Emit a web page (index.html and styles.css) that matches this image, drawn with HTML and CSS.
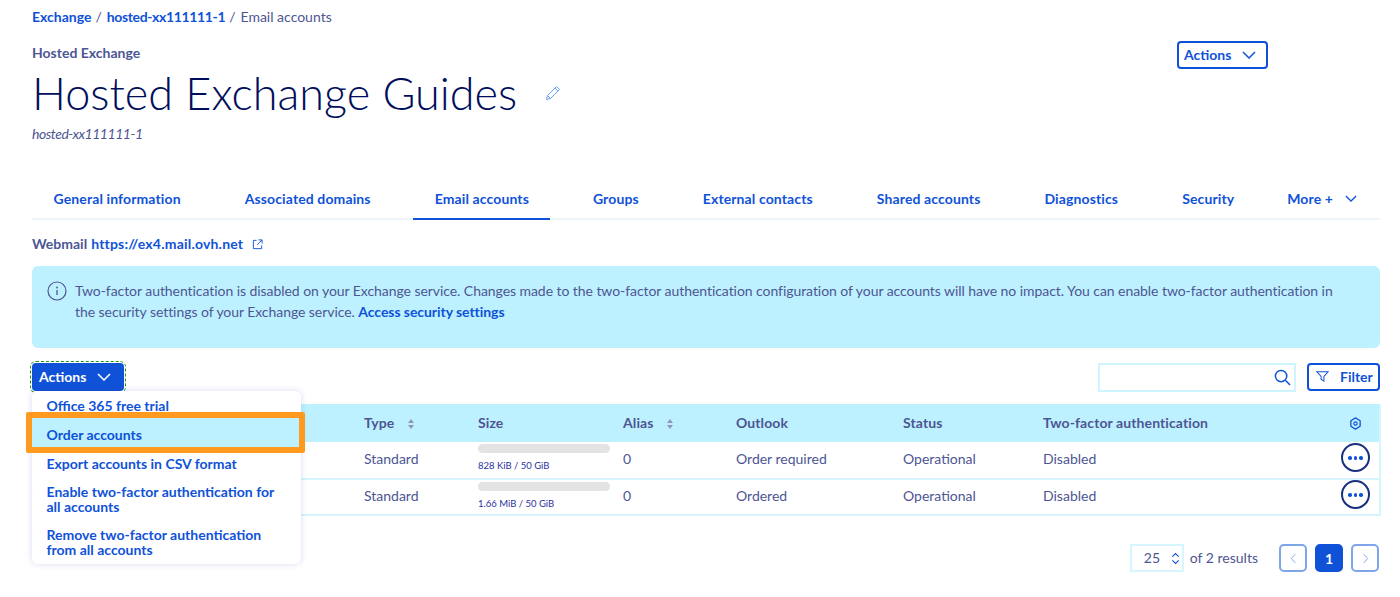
FILE: index.html
```html
<!DOCTYPE html>
<html lang="en">
<head>
<meta charset="utf-8">
<title>Email accounts</title>
<link rel="stylesheet" href="styles.css">
</head>
<body>
<nav class="crumbs"><a href="#">Exchange</a><span class="sep">/</span><a class="crumb-id" href="#">hosted-xx111111-1</a><span class="sep">/</span><span>Email accounts</span></nav>
<header class="head">
  <div class="head-main">
    <div class="eyebrow">Hosted Exchange</div>
    <div class="title-row">
      <h1>Hosted Exchange Guides</h1>
      <svg class="pencil" viewBox="0 0 16 16" width="16" height="16"><path d="M1.5 14.5l1-4L11.5 1.5l3 3-9 9zM2.5 10.5l3 3M10 3l3 3" fill="none" stroke="#6f9ff0" stroke-width="1"/></svg>
    </div>
    <div class="subtitle">hosted-xx111111-1</div>
  </div>
  <button class="btn btn-outline head-actions">Actions
    <svg class="chev" viewBox="0 0 14 8" width="14" height="8"><path d="M1 1l6 6 6-6" fill="none" stroke="currentColor" stroke-width="1.5"/></svg>
  </button>
</header>
<div class="tabs">
  <a class="tab" href="#">General information</a>
  <a class="tab" href="#">Associated domains</a>
  <a class="tab active" href="#">Email accounts</a>
  <a class="tab" href="#">Groups</a>
  <a class="tab" href="#">External contacts</a>
  <a class="tab" href="#">Shared accounts</a>
  <a class="tab" href="#">Diagnostics</a>
  <a class="tab" href="#">Security</a>
  <a class="tab more" href="#">More +
    <svg class="chev" viewBox="0 0 14 8" width="12" height="7"><path d="M1 1l6 6 6-6" fill="none" stroke="currentColor" stroke-width="1.5"/></svg>
  </a>
</div>
<div class="webmail"><strong>Webmail</strong> <a href="#">https://ex4.mail.ovh.net</a>
  <svg class="ext" viewBox="0 0 12 12" width="11" height="11"><path d="M5 1.5H1.5v9h9V7M7 1h4v4M11 1L5.5 6.5" fill="none" stroke="#0f52d8" stroke-width="1"/></svg>
</div>
<div class="alert">
  <svg class="info" viewBox="0 0 20 20" width="20" height="20"><circle cx="10" cy="10" r="9" fill="none" stroke="#4d5693" stroke-width="1.2"/><path d="M10 9v5" stroke="#4d5693" stroke-width="1.3"/><circle cx="10" cy="6.5" r=".9" fill="#4d5693"/></svg>
  <p>Two-factor authentication is disabled on your Exchange service. Changes made to the two-factor authentication configuration of your accounts will have no impact. You can enable two-factor authentication in the security settings of your Exchange service. <a href="#">Access security settings</a></p>
</div>
<div class="toolbar">
  <div class="menu-wrap">
    <button class="btn btn-solid">Actions
      <svg class="chev" viewBox="0 0 14 8" width="14" height="8"><path d="M1 1l6 6 6-6" fill="none" stroke="currentColor" stroke-width="1.5"/></svg>
    </button>
    <ul class="menu">
      <li><a href="#">Office 365 free trial</a></li>
      <li class="hl"><a href="#">Order accounts</a></li>
      <li><a href="#">Export accounts in CSV format</a></li>
      <li><a href="#">Enable two-factor authentication for all accounts</a></li>
      <li><a href="#">Remove two-factor authentication from all accounts</a></li>
    </ul>
  </div>
  <div class="tools">
    <div class="search">
      <svg viewBox="0 0 18 18" width="17" height="17"><circle cx="7.5" cy="7.5" r="6" fill="none" stroke="#0f52d8" stroke-width="1.6"/><path d="M12 12l5 5" stroke="#0f52d8" stroke-width="1.6"/></svg>
    </div>
    <button class="btn btn-outline filter">
      <svg viewBox="0 0 14 14" width="13" height="13"><path d="M1 2h12L8.5 7v5l-3-2V7z" fill="none" stroke="currentColor" stroke-width="1.1"/></svg>
      Filter
    </button>
  </div>
</div>
<table class="grid">
  <colgroup><col class="c1"><col class="c2"><col class="c3"><col class="c4"><col class="c5"><col class="c6"><col class="c7"><col class="c8"></colgroup>
  <thead>
    <tr>
      <th></th>
      <th>Type <svg class="sort" viewBox="0 0 8 12" width="8" height="12"><path d="M4 1l3 4H1zM4 11L1 7h6z" fill="#8f96c0"/></svg></th>
      <th>Size</th>
      <th>Alias <svg class="sort" viewBox="0 0 8 12" width="8" height="12"><path d="M4 1l3 4H1zM4 11L1 7h6z" fill="#8f96c0"/></svg></th>
      <th>Outlook</th>
      <th>Status</th>
      <th>Two-factor authentication</th>
      <th class="right"><svg class="cog" viewBox="0 0 14 14" width="13" height="13"><path d="M7 1l5 3v6l-5 3-5-3V4z" fill="none" stroke="#0f52d8" stroke-width="1.4" stroke-linejoin="round"/><circle cx="7" cy="7" r="1.8" fill="none" stroke="#0f52d8" stroke-width="1.2"/></svg></th>
    </tr>
  </thead>
  <tbody>
    <tr>
      <td></td><td>Standard</td>
      <td class="size"><div class="bar"></div><small>828 KiB / 50 GiB</small></td>
      <td>0</td><td>Order required</td><td>Operational</td><td>Disabled</td>
      <td class="right"><span class="dots"><i></i><i></i><i></i></span></td>
    </tr>
    <tr>
      <td></td><td>Standard</td>
      <td class="size"><div class="bar"></div><small>1.66 MiB / 50 GiB</small></td>
      <td>0</td><td>Ordered</td><td>Operational</td><td>Disabled</td>
      <td class="right"><span class="dots"><i></i><i></i><i></i></span></td>
    </tr>
  </tbody>
</table>
<div class="pager">
  <div class="per-page">25
    <svg viewBox="0 0 10 14" width="9" height="13"><path d="M1.5 5L5 1.5 8.5 5M1.5 9L5 12.5 8.5 9" fill="none" stroke="#0f52d8" stroke-width="1.2"/></svg>
  </div>
  <span class="results">of 2 results</span>
  <div class="pages">
    <button class="page"><svg viewBox="0 0 8 12" width="7" height="11"><path d="M6 1L1.5 6 6 11" fill="none" stroke="#7ea4ea" stroke-width="1.1"/></svg></button>
    <button class="page current">1</button>
    <button class="page"><svg viewBox="0 0 8 12" width="7" height="11"><path d="M2 1l4.5 5L2 11" fill="none" stroke="#7ea4ea" stroke-width="1.1"/></svg></button>
  </div>
</div>
</body>
</html>
```

FILE: styles.css
```css
* { box-sizing: border-box; }
html, body { margin: 0; padding: 0; }
body {
  padding: 7px 20px 0 32px;
  height: 597px;
  overflow: hidden;
  background: #fff;
  color: #4d5693;
  font-family: "Lato", "Noto Sans", sans-serif;
  font-size: 14px;
  line-height: 20px;
}
a { color: #0f52d8; text-decoration: none; font-weight: 700; }
button { font-family: inherit; }
.crumbs { height: 20px; display: flex; align-items: center; }
.crumb-id { letter-spacing: -.35px; }
.sep { margin: 0 5px 0 4px; }
.head { display: flex; justify-content: space-between; align-items: flex-start; margin-top: 16px; height: 131px; }
.eyebrow { font-weight: 700; height: 20px; }
.title-row { display: flex; align-items: center; gap: 28px; height: 58px; margin-top: 1px; }
h1 { margin: 0; font-size: 45px; font-weight: 300; color: #000e5c; line-height: 58px; white-space: nowrap; }
.subtitle { font-style: italic; margin-top: 2px; letter-spacing: -.47px; }
.btn {
  display: inline-flex; align-items: center;
  border-radius: 4px; font-weight: 700; font-size: 14px; cursor: pointer;
}
.btn-outline { border: 2px solid #0f52d8; background: #fff; color: #0f52d8; }
.btn-solid { border: 0; background: #0f52d8; color: #fff; }
.head-actions { height: 28px; width: 91px; padding: 0 0 1px 5px; gap: 11px; margin: -2px 112px 0 0; }
.tabs { display: flex; gap: 21px; height: 40px; border-bottom: 2px solid #eef5fb; margin-top: 6px; }
.tab { display: flex; align-items: center; justify-content: center; height: 40px; padding: 0 21.5px 3px; white-space: nowrap; letter-spacing: .12px; }
.tab.active { border-bottom: 2px solid #0f52d8; padding-bottom: 1px; }
.tab.more { gap: 12px; padding-right: 23px; padding-left: 0; margin-left: auto; }
.webmail { margin-top: 14px; height: 20px; display: flex; align-items: center; gap: 4px; }
.webmail strong { font-weight: 700; }
.webmail a { letter-spacing: .2px; }
.ext { margin-left: 5px; }
.alert {
  margin-top: 12px; height: 82px; padding: 14px 24px 0 15px;
  background: #bef1ff; border-radius: 6px; display: flex; gap: 8px;
  line-height: 21px; letter-spacing: -.06px;
}
.alert p { margin: 0; }
.info { flex: none; margin-top: 1px; }
.toolbar { display: flex; justify-content: space-between; margin-top: 15px; height: 29px; }
.menu-wrap { position: relative; width: 92px; height: 28px; }
.btn-solid { width: 92px; height: 28px; padding: 0 0 1px 7px; gap: 11px; outline: 1px dashed #1f9a10; outline-offset: 1px; }
.menu {
  position: absolute; z-index: 2; left: 0; top: 28px; width: 269px; height: 173px;
  margin: 0; padding: 7px 15px 0 14.5px; list-style: none; background: #fff; border-radius: 6px;
  box-shadow: 0 0 6px rgba(60, 70, 180, .2);
}
.menu li { position: relative; line-height: 15px; margin-bottom: 14px; }
.menu li:nth-child(3), .menu li:nth-child(4) { margin-bottom: 13px; }
.menu li.hl::before {
  content: ""; position: absolute; top: -15px; bottom: -11px; left: -20.5px; right: -19px;
  background: #bef1ff; border: 6px solid #ff9a1f; border-radius: 2px;
}
.menu li.hl a { position: relative; }
.tools { display: flex; gap: 11px; }
.search {
  width: 198px; height: 29px; border: 2px solid #cdf4ff; display: flex;
  align-items: center; justify-content: flex-end; padding-right: 3px;
}
.filter { width: 73px; height: 28px; padding: 0 0 1px 7px; gap: 11px; }
.grid {
  margin-top: 12px; width: 1347px; table-layout: fixed; border-collapse: collapse;
  border: 2px solid #d5f6ff; border-top: 0;
}
.c1 { width: 331px; } .c2 { width: 114px; } .c3 { width: 145px; } .c4 { width: 113px; }
.c5 { width: 167px; } .c6 { width: 140px; } .c7 { width: 280px; } .c8 { width: 57px; }
th, td { padding: 0; text-align: left; }
td { padding-bottom: 2px; }
thead tr { background: #bef1ff; height: 38px; }
th { font-weight: 700; letter-spacing: .1px; }
tbody tr { height: 36.5px; border-bottom: 2px solid #d5f6ff; }
.sort { margin-left: 9px; vertical-align: -2px; }
.right { text-align: right; padding-right: 9px; }
td.right { padding-bottom: 4px; }
th.right { padding-right: 17px; }
.cog { vertical-align: -2px; }
td.size { vertical-align: top; padding: 2px 0 0; }
.bar { width: 132px; height: 9px; border-radius: 5px; background: #e3e3e3; }
small { display: block; font-size: 9.5px; line-height: 14px; margin-top: 6px; color: #2c2fa0; }
.dots {
  display: inline-flex; align-items: center; justify-content: center; gap: 2px;
  width: 29px; height: 29px; border: 2px solid #16307f; border-radius: 50%; vertical-align: middle;
}
.dots i { width: 3.5px; height: 3.5px; border-radius: 50%; background: #0f52d8; }
.pager { display: flex; align-items: center; justify-content: flex-end; margin: 28px 1px 0 0; height: 28px; }
.per-page {
  width: 54px; height: 28px; border: 2px solid #d5f6ff; display: flex; align-items: center;
  padding-left: 12px; gap: 11px;
}
.results { margin: 0 21px 0 6px; }
.pages { display: flex; gap: 8px; }
.page {
  width: 28px; height: 28px; border: 2px solid #7ea4ea; background: #fff; border-radius: 5px;
  display: flex; align-items: center; justify-content: center; padding: 0;
}
.page.current { background: #0f52d8; border-color: #0f52d8; color: #fff; font-weight: 700; font-size: 14px; }
```
